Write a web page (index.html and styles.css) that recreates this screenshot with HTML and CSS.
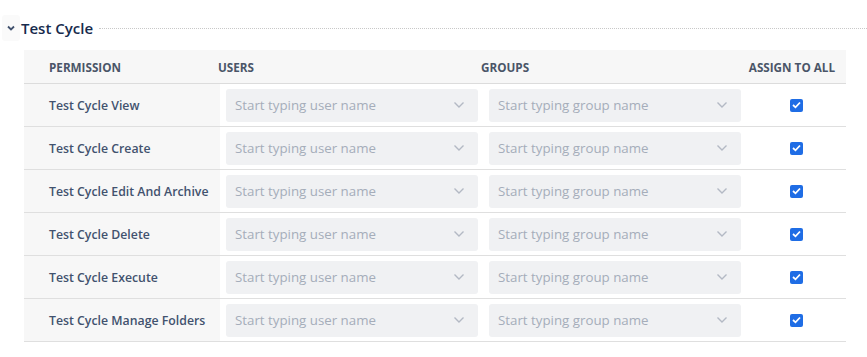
FILE: index.html
```html
<!DOCTYPE html>
<html lang="en">
<head>
  <meta charset="UTF-8">
  <title>Permissions - Test Cycle</title>
  <link rel="stylesheet" href="styles.css">
</head>
<body>
  <div class="section-head">
    <span class="toggle">
      <svg width="10" height="10" viewBox="0 0 10 10"><path d="M2 3.5 L5 6.5 L8 3.5" fill="none" stroke="#42526e" stroke-width="1.8"/></svg>
    </span>
    <span class="section-title">Test Cycle</span>
    <span class="rule"></span>
  </div>

  <div class="perm-table">
    <div class="row head">
      <div class="cell perm">PERMISSION</div>
      <div class="cell users-h">USERS</div>
      <div class="cell groups-h">GROUPS</div>
      <div class="cell all">ASSIGN TO ALL</div>
    </div>
  </div>

  <script>
    const perms = ["Test Cycle View", "Test Cycle Create", "Test Cycle Edit And Archive",
      "Test Cycle Delete", "Test Cycle Execute", "Test Cycle Manage Folders"];
    const chev = '<svg width="12" height="8" viewBox="0 0 12 8"><path d="M1.5 1.5 L6 6 L10.5 1.5" fill="none" stroke="#b3b9c4" stroke-width="1.4"/></svg>';
    const table = document.querySelector(".perm-table");
    perms.forEach(function (p) {
      const row = document.createElement("div");
      row.className = "row";
      row.innerHTML =
        '<div class="cell perm label">' + p + '</div>' +
        '<div class="cell"><div class="picker"><span>Start typing user name</span>' + chev + '</div></div>' +
        '<div class="cell"><div class="picker"><span>Start typing group name</span>' + chev + '</div></div>' +
        '<div class="cell all"><span class="check"><svg width="9" height="8" viewBox="0 0 9 8"><path d="M1 4 L3.5 6.3 L8 1.5" fill="none" stroke="#fff" stroke-width="1.8"/></svg></span></div>';
      table.appendChild(row);
    });
  </script>
</body>
</html>
```

FILE: styles.css
```css
body { margin: 0; font-family: "Open Sans", "Noto Sans", sans-serif; color: #172b4d; background: #fff; }

.section-head { display: flex; align-items: center; height: 26px; margin-top: 15px; padding-left: 2px; }
.toggle { width: 18px; height: 26px; display: flex; align-items: center; justify-content: center; background: #fafafa; border-radius: 3px; }
.section-title { font-size: 15px; font-weight: 600; margin-left: 1px; color: #172b4d; }
.rule { flex: 1; border-top: 1px dotted #c8c8c8; margin-left: 6px; margin-top: 1px; }

.perm-table { margin: 9px 0 0 24px; width: 822px; }
.row { display: grid; grid-template-columns: 196px 263px 263px 1fr; height: 42px; border-bottom: 1px solid #dfdfdf; }
.row.head { height: 33px; background: #f7f7f7; border-bottom: 1px solid #dcdcdc; }
.cell { display: flex; align-items: center; }
.head .cell { font-size: 11.7px; font-weight: 700; color: #4a5568; }
.perm { padding-left: 25px; background: #f7f7f7; }
.users-h { margin-left: -2px; }
.groups-h { margin-left: -2px; }
.all { justify-content: center; }
.head .all { justify-content: flex-end; padding-right: 11px; }
.label { font-size: 12.3px; font-weight: 600; color: #42526e; }

.picker { margin-left: 6px; width: 252px; height: 33px; box-sizing: border-box; background: #f0f1f3; border-radius: 3px; display: flex; align-items: center; justify-content: space-between; padding: 0 13px 0 9px; font-size: 13.3px; color: #a5adba; }

.check { width: 13px; height: 13px; border-radius: 2px; background: #1f6de5; display: flex; align-items: center; justify-content: center; }
```
